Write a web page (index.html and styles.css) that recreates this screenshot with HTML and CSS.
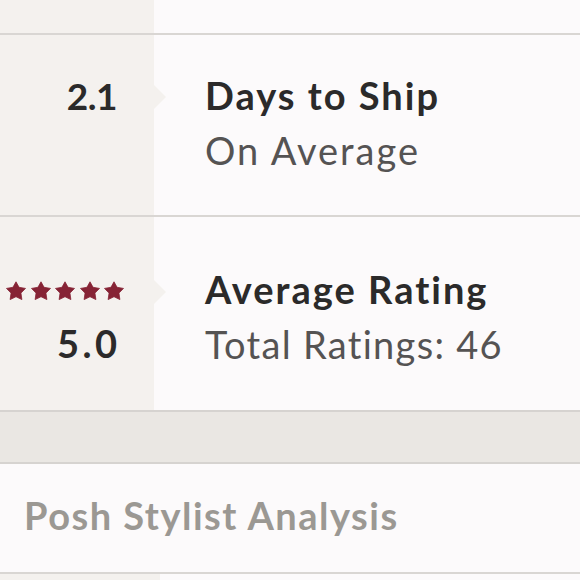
FILE: index.html
```html
<!DOCTYPE html>
<html>
<head>
<meta charset="utf-8">
<link rel="stylesheet" href="styles.css">
</head>
<body>
<div class="list">
  <div class="row row-top">
    <div class="left"></div>
    <div class="right"></div>
  </div>
  <div class="row row-ship">
    <div class="left">
      <div class="num">2.1</div>
    </div>
    <div class="right">
      <div class="title">Days to Ship</div>
      <div class="sub">On Average</div>
    </div>
  </div>
  <div class="row row-rating">
    <div class="left">
      <div class="stars">
        <svg viewBox="0 0 20 20" class="star"><polygon points="10,0.8 13.06,6.29 19.51,7.41 14.95,12.11 15.88,18.59 10,15.7 4.12,18.59 5.05,12.11 0.49,7.41 6.94,6.29"/></svg>
        <svg viewBox="0 0 20 20" class="star"><polygon points="10,0.8 13.06,6.29 19.51,7.41 14.95,12.11 15.88,18.59 10,15.7 4.12,18.59 5.05,12.11 0.49,7.41 6.94,6.29"/></svg>
        <svg viewBox="0 0 20 20" class="star"><polygon points="10,0.8 13.06,6.29 19.51,7.41 14.95,12.11 15.88,18.59 10,15.7 4.12,18.59 5.05,12.11 0.49,7.41 6.94,6.29"/></svg>
        <svg viewBox="0 0 20 20" class="star"><polygon points="10,0.8 13.06,6.29 19.51,7.41 14.95,12.11 15.88,18.59 10,15.7 4.12,18.59 5.05,12.11 0.49,7.41 6.94,6.29"/></svg>
        <svg viewBox="0 0 20 20" class="star"><polygon points="10,0.8 13.06,6.29 19.51,7.41 14.95,12.11 15.88,18.59 10,15.7 4.12,18.59 5.05,12.11 0.49,7.41 6.94,6.29"/></svg>
      </div>
      <div class="num num-rating">5.0</div>
    </div>
    <div class="right">
      <div class="title">Average Rating</div>
      <div class="sub sub-rating">Total Ratings: 46</div>
    </div>
  </div>
</div>
<div class="band"></div>
<div class="section">
  <h2 class="section-title">Posh Stylist Analysis</h2>
</div>
<div class="row row-bottom">
  <div class="left"></div>
  <div class="right"></div>
</div>
</body>
</html>
```
FILE: styles.css
```css
html, body {
  margin: 0;
  padding: 0;
  background: #fcfafb;
  font-family: Lato, "Open Sans", sans-serif;
  color: #2b2a2a;
  width: 580px;
  overflow: hidden;
}

.row {
  display: flex;
  border-top: 2px solid #d9d6d3;
}

.row-top {
  border-top: none;
  height: 33px;
}

.left {
  width: 154px;
  flex: none;
  background: #f4f1ee;
  position: relative;
  display: flex;
  flex-direction: column;
  align-items: flex-end;
  padding-right: 37px;
  box-sizing: border-box;
}

.right {
  flex: 1;
  padding-left: 51px;
}

.num {
  font-size: 37px;
  font-weight: 700;
  line-height: 55px;
  letter-spacing: -0.5px;
}

.title {
  font-size: 38px;
  font-weight: 700;
  line-height: 55px;
  letter-spacing: 2px;
}

.sub {
  font-size: 38px;
  font-weight: 400;
  line-height: 55px;
  letter-spacing: 2px;
  color: #555353;
}

.row-ship {
  height: 180px;
}

.row-ship .left,
.row-ship .right {
  padding-top: 33px;
}

.row-ship .left::after,
.row-rating .left::after {
  content: "";
  position: absolute;
  right: -12px;
  width: 0;
  height: 0;
  border-top: 12px solid transparent;
  border-bottom: 12px solid transparent;
  border-left: 12px solid #f4f1ee;
}

.row-ship .left::after {
  top: 50px;
}

.row-rating {
  height: 193px;
}

.row-rating .left::after {
  top: 63px;
}

.row-rating .right {
  padding-top: 45px;
}

.sub-rating {
  line-height: 54px;
  letter-spacing: 1.3px;
}

.stars {
  display: flex;
  gap: 4.5px;
  margin-top: 64px;
  margin-right: -7px;
  height: 20px;
}

.star {
  width: 20px;
  height: 20px;
  flex: none;
  fill: #862335;
  stroke: #862335;
  stroke-width: 0.8;
  stroke-linejoin: round;
}

.num-rating {
  margin-top: 22px;
  line-height: 40px;
  font-size: 38px;
  letter-spacing: 3.5px;
  margin-right: -3.5px;
}

.band {
  height: 50px;
  border-top: 2px solid #d6d3d0;
  border-bottom: 2px solid #d6d3d0;
  background: #eae7e3;
}

.section {
  height: 108px;
  box-sizing: border-box;
  padding-bottom: 6px;
  display: flex;
  align-items: center;
  padding-left: 24px;
}

.section-title {
  margin: 0;
  font-size: 38px;
  font-weight: 700;
  letter-spacing: 1.5px;
  color: #9b9893;
  line-height: 40px;
}

.row-bottom {
  height: 20px;
}

.row-bottom .left {
  width: 160px;
}
```
